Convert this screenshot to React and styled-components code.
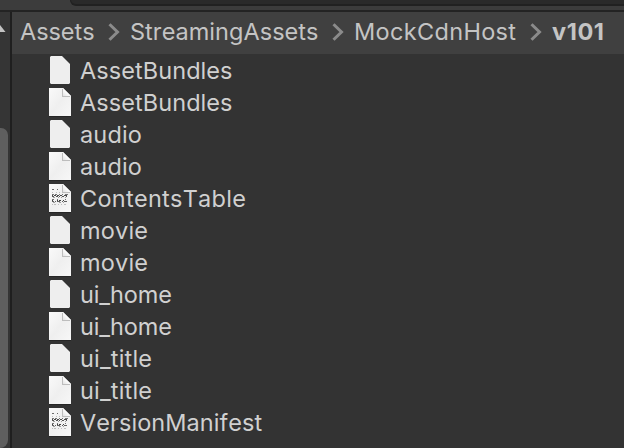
import React from 'react';
import styled, { createGlobalStyle } from 'styled-components';

const GlobalStyle = createGlobalStyle`
  * { box-sizing: border-box; }
  body { margin: 0; background: #333333; overflow: hidden; }
`;

const Window = styled.div`
  width: 624px;
  height: 448px;
  display: flex;
  flex-direction: column;
  overflow: hidden;
  background: #333333;
  color: #d0d0d0;
  font-family: Inter, 'Liberation Sans', sans-serif;
  font-size: 23.5px;
  font-kerning: none;
`;

const Toolbar = styled.header`
  flex: 0 0 12px;
  padding-left: 70px;
  background: #3c3c3c;
  border-bottom: 2px solid #232323;
`;

const SearchField = styled.div`
  height: 6px;
  background: #2a2a2a;
  border: solid #212121;
  border-width: 0 0 2px 1px;
  border-bottom-left-radius: 6px;
`;

const Body = styled.div`
  flex: 1;
  display: flex;
  min-height: 0;
`;

const ScrollGutter = styled.aside`
  flex: 0 0 12px;
  display: flex;
  flex-direction: column;
  background: #353535;
  border-right: 2px solid #1f1f1f;
`;

const ArrowSlot = styled.div`
  height: 116px;
  padding-top: 13px;
  line-height: 0;
`;

const ScrollThumb = styled.div`
  width: 8px;
  height: 320px;
  background: #5f5f5f;
  border-radius: 0 7px 8px 0;
`;

const Browser = styled.main`
  flex: 1;
  min-width: 0;
`;

const Breadcrumbs = styled.nav`
  height: 42px;
  display: flex;
  align-items: center;
  padding: 0 0 2px 8px;
  background: #404040;
  color: #c4c4c4;
`;

const Crumb = styled.span`
  flex: 0 0 ${(p) => p.$width}px;
  line-height: 32px;
  padding-bottom: 1px;
  white-space: nowrap;
  font-weight: ${(p) => (p.$current ? 700 : 400)};
  letter-spacing: ${(p) => p.$tracking}px;
`;

const Separator = styled.svg`
  flex: none;
  width: 12px;
  height: 18px;
  margin: 0 10px 0 12px;
`;

const FileList = styled.ul`
  list-style: none;
  margin: 0;
  padding: 0 0 0 36px;
`;

const FileRow = styled.li`
  height: 32px;
  display: flex;
  align-items: center;
  white-space: nowrap;
`;

const FileIcon = styled.svg`
  flex: none;
  width: 24px;
  height: 32px;
  margin-right: 8px;
`;

const FileName = styled.span`
  line-height: 32px;
  padding-top: 2px;
  letter-spacing: ${(p) => p.$tracking}px;
`;

const files = [
  ['AssetBundles', 'plain', 0.07],
  ['AssetBundles', 'page', 0.07],
  ['audio', 'plain', 0.15],
  ['audio', 'page', 0.15],
  ['ContentsTable', 'text', 0.27],
  ['movie', 'plain', 0.2],
  ['movie', 'page', 0.2],
  ['ui_home', 'plain', -0.12],
  ['ui_home', 'page', -0.12],
  ['ui_title', 'plain', 0.18],
  ['ui_title', 'page', 0.18],
  ['VersionManifest', 'text', 0.06],
];

const crumbs = [
  ['Assets', 76, -0.05],
  ['StreamingAssets', 190, 0.04],
  ['MockCdnHost', 164, 0.33],
  ['v101', 60, 0.6],
];

function Icon({ kind }) {
  if (kind === 'plain') {
    return (
      <FileIcon viewBox="0 0 24 32">
        <path d="M3 2H14L22 10V29L21 30H3L2 29V3Z" fill="#eeeeee" />
      </FileIcon>
    );
  }
  return (
    <FileIcon viewBox="0 0 24 32">
      <path d="M1 29H23V31H1Z" fill="#262626" />
      <path d="M1 2H15L23 10V30H1Z" fill="url(#paper)" />
      <path d="M14 3H15V10H22V11H14Z" fill="#bdbdbd" />
      <path d="M15 2L23 10H15Z" fill="url(#fold)" />
      {kind === 'text' && (
        <g fill="none" stroke="#222222" strokeWidth="1">
          <path d="M4 7.5H6M9 7.5H10" opacity=".65" />
          <path d="M4 10.5H5M8 10.5H9M11 10.5H12" opacity=".25" />
          <path d="M4 12.5H6M7 12.5H9M11 12.5H12M14 12.5H15M17 12.5H20" opacity=".6" />
          <path d="M4 13.5H5M6 13.5H8M9 13.5H11M12 13.5H14M16 13.5H19" opacity=".8" />
          <path d="M4 14.5H6M8 14.5H10M11 14.5H12M14 14.5H16M18 14.5H19" opacity=".75" />
          <path d="M5 15.5H7M10 15.5H11M13 15.5H14M17 15.5H18" opacity=".4" />
          <path d="M4 17.5H6M9 17.5H10M17 17.5H18" opacity=".6" />
          <path d="M4 18.5H5M9 18.5H10M11 18.5H13M15 18.5H16" opacity=".85" />
          <path d="M4 19.5H6M7 19.5H8M9 19.5H12M14 19.5H15M16 19.5H19" opacity=".7" />
          <path d="M5 20.5H7M11 20.5H13M15 20.5H16" opacity=".4" />
          <path d="M4 22.5H5M6 22.5H8M10 22.5H11M13 22.5H14M16 22.5H18" opacity=".25" />
        </g>
      )}
    </FileIcon>
  );
}

const Definitions = styled.svg`
  display: block;
  width: 0;
  height: 0;
`;

export default function App() {
  return (
    <Window>
      <GlobalStyle />
      <Definitions>
        <defs>
          <linearGradient id="paper" x1="0" y1="0" x2="1" y2="1">
            <stop offset="0" stopColor="#fafafa" />
            <stop offset=".5" stopColor="#efefef" />
            <stop offset="1" stopColor="#f7f7f7" />
          </linearGradient>
          <linearGradient id="fold" x1="1" y1="0" x2="0" y2="1">
            <stop offset=".5" stopColor="#ffffff" />
            <stop offset="1" stopColor="#e2e2e2" />
          </linearGradient>
        </defs>
      </Definitions>
      <Toolbar><SearchField /></Toolbar>
      <Body>
        <ScrollGutter>
          <ArrowSlot>
            <svg width="6" height="8" viewBox="0 0 6 8"><path d="M0 0L5.500 7H0Z" fill="#c4c4c4" /></svg>
          </ArrowSlot>
          <ScrollThumb />
        </ScrollGutter>
        <Browser>
          <Breadcrumbs>
            {crumbs.map(([name, width, tracking], i) => (
              <React.Fragment key={name}>
                {i > 0 && (
                  <Separator viewBox="0 0 12 18">
                    <path d="M1.500 1.200L9.500 9L1.500 16.800" fill="none" stroke="#8b8b8b" strokeWidth="3" />
                  </Separator>
                )}
                <Crumb $width={width} $tracking={tracking} $current={i === 3}>{name}</Crumb>
              </React.Fragment>
            ))}
          </Breadcrumbs>
          <FileList>
            {files.map(([name, kind, tracking], i) => (
              <FileRow key={i}>
                <Icon kind={kind} />
                <FileName $tracking={tracking}>{name}</FileName>
              </FileRow>
            ))}
          </FileList>
        </Browser>
      </Body>
    </Window>
  );
}
